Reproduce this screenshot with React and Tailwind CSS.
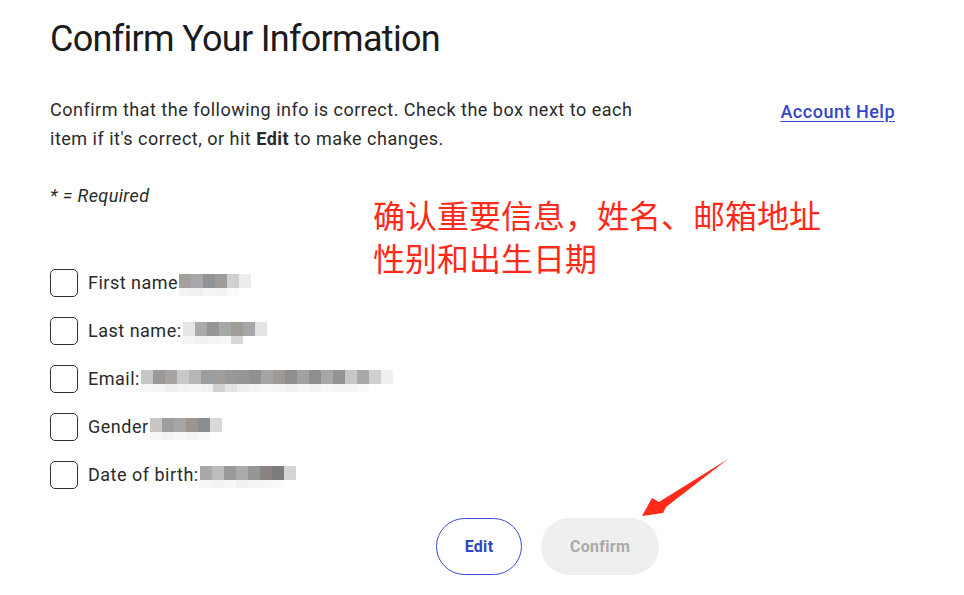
import React from "react";

const rows = [
  { label: "First name", top: ["#a39f9c", "#a6a8a9", "#929396", "#9e9b98", "#cfd0d1", "#eceded"], bot: ["#f4f4f4", "#f0f0f0", "#f6f6f6", "#f3f3f3", "#fafafa"] },
  { label: "Last name:", top: ["#e6e6e6", "#a9aaab", "#939597", "#a7a8a8", "#a09c98", "#a5a7a9", "#e3e3e3"], bot: ["#f5f5f5", "#f1f1f1", "#f4f4f4", "#f6f6f6", "#d8d8d8"] },
  { label: "Email:", top: ["#c7c7c7", "#9a9898", "#a7a3a0", "#c6c8c9", "#b7b7b7", "#9c9d9e", "#a19d9a", "#979899", "#949698", "#8f9091", "#a4a4a5", "#a09893", "#8d8e90", "#9fa1a3", "#8f8f8f", "#a8a7a6", "#939393", "#c7c7c8", "#a9a9aa", "#cfcfcf", "#eeeeee"], bot: ["#f6f6f6", "#f4f4f4", "#eeeeee", "#f2f2f2", "#f5f5f5", "#f1f1f1", "#d0d0d0", "#e3e3e3", "#eeeeee", "#f3f3f3", "#f6f6f6", "#f5f5f5", "#f1f1f1", "#f6f6f6", "#f2f2f2", "#f7f7f7", "#f4f4f4", "#f6f6f6", "#fafafa"] },
  { label: "Gender", top: ["#c9c5c2", "#9b9d9f", "#a6a6a6", "#9c948f", "#8c8d90", "#d8d9da"], bot: ["#f6f6f6", "#f3f3f3", "#f7f7f7", "#f4f4f4", "#fafafa"] },
  { label: "Date of birth:", top: ["#a9a9a9", "#bdbdbd", "#9a9a9a", "#ababab", "#959697", "#8a8381", "#7b7b7d", "#d3d4d6"], bot: ["#f6f6f6", "#f3f3f3", "#f7f7f7", "#f1f1f1", "#f4f4f4", "#f6f6f6", "#fafafa"] },
];

function Mosaic({ top, bot }) {
  return (
    <div className="flex flex-col ml-[1px] mt-[4px]">
      <div className="flex">
        {top.map((c, i) => (
          <div key={i} className="w-[12px] h-[14px]" style={{ background: c }} />
        ))}
      </div>
      <div className="flex">
        {bot.map((c, i) => (
          <div key={i} className="w-[12px] h-[8px]" style={{ background: c }} />
        ))}
      </div>
    </div>
  );
}

export default function App() {
  return (
    <div
      className="relative w-[964px] h-[595px] bg-white overflow-hidden text-[#222]"
      style={{ fontFamily: "Roboto, 'Noto Sans', sans-serif" }}
    >
      <div className="pl-[50px] pr-[69px] pt-[15px]">
        <h1 className="text-[36px] leading-[48px] font-normal text-[#1b1b1b] tracking-[-0.7px]">
          Confirm Your Information
        </h1>
        <div className="flex justify-between mt-[32px]">
          <p className="w-[600px] text-[18px] leading-[29px] text-[#2a2a2a] tracking-[0.5px]">
            Confirm that the following info is correct. Check the box next to each item if it's correct, or hit <b className="font-bold">Edit</b> to make changes.
          </p>
          <a href="#" className="text-[18px] leading-[29px] font-medium text-[#3346c5] underline underline-offset-[3px] mt-[2px] tracking-[0.5px]">
            Account Help
          </a>
        </div>
        <p className="mt-[28px] text-[18px] leading-[29px] italic text-[#2a2a2a] tracking-[0.4px]">* = Required</p>
        <div className="mt-[59px] flex flex-col gap-[20px]">
          {rows.map((r) => (
            <div key={r.label} className="flex items-center h-[28px]">
              <div className="w-[28px] h-[28px] rounded-[5px] border border-[#333] bg-white" />
              <span className="ml-[10px] text-[18px] leading-[28px] text-[#2a2a2a] tracking-[0.5px]">{r.label}</span>
              <Mosaic top={r.top} bot={r.bot} />
            </div>
          ))}
        </div>
        <div className="flex gap-[19px] mt-[29px] ml-[386px]">
          <button className="w-[86px] h-[57px] rounded-full border border-[#3a4fcf] text-[#2f45c2] text-[16px] font-bold bg-white tracking-[0.3px]">
            Edit
          </button>
          <button className="w-[118px] h-[57px] rounded-full bg-[#efefef] text-[#aaaaaa] text-[16px] font-bold tracking-[0.3px]">
            Confirm
          </button>
        </div>
      </div>

      <div
        className="absolute left-[373px] top-[193px] text-[32px] leading-[43px] text-[#ff2a1a]"
        style={{ fontFamily: "'Noto Sans CJK SC', sans-serif" }}
      >
        确认重要信息，姓名、邮箱地址
        <br />
        性别和出生日期
      </div>

      <svg className="absolute left-0 top-0 pointer-events-none" width="964" height="595" viewBox="0 0 964 595">
        <path d="M728 459 L666 507 L663 513 L642 516 L652 498 L659 502 Z" fill="#ff2a1a" />
      </svg>
    </div>
  );
}
